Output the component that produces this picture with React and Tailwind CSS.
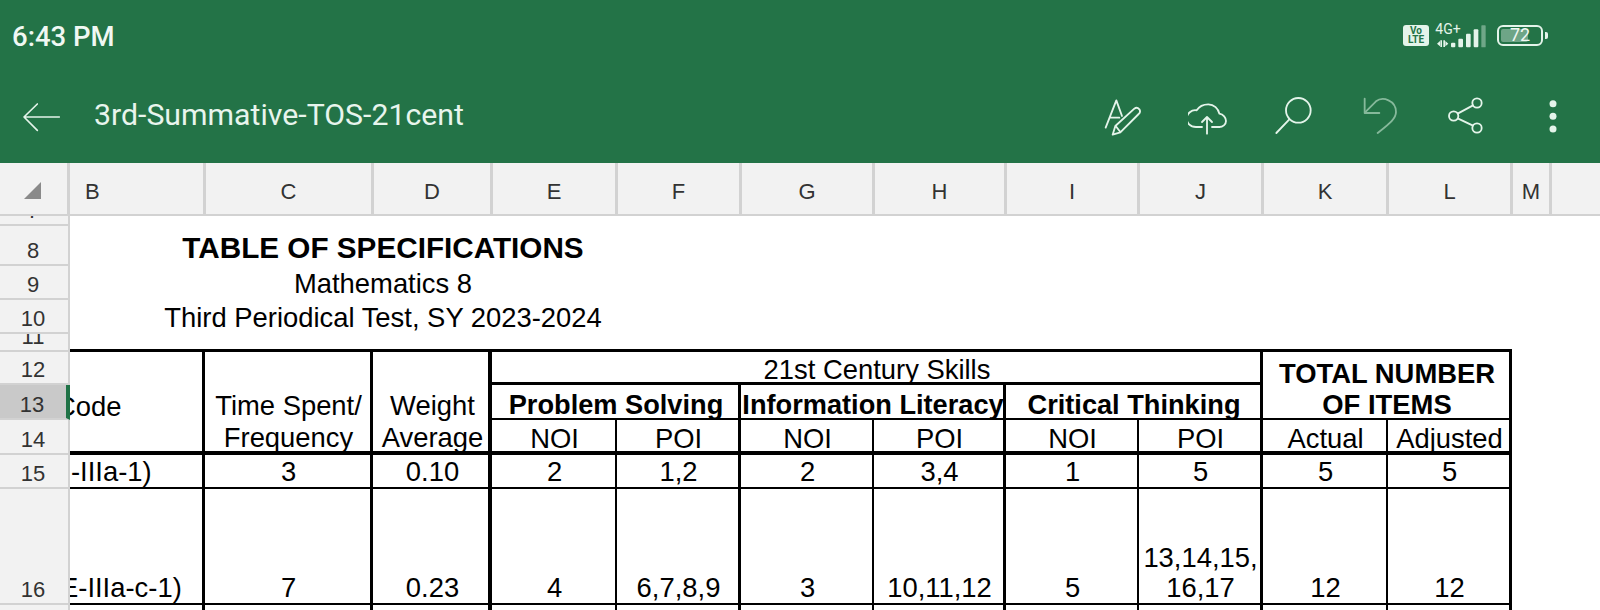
const ICON = "#e4f4ea";

function Icon({ cx, className = "", children }) {
  return (
    <div className={"flex w-[86px] items-center justify-center " + className}>
      <svg width="40" height="40" viewBox={`${cx - 60} 35 120 120`} fill="none" stroke={ICON} strokeWidth="5.5" strokeLinecap="round" strokeLinejoin="round">
        {children}
      </svg>
    </div>
  );
}

function StatusBar() {
  return (
    <div className="flex h-[70px] items-center justify-between pl-3 pr-[57px] text-[#f0f8f3]">
      <span className="mt-[4px] text-[27.5px] font-medium">6:43 PM</span>
      <div className="flex items-center">
        <div className="flex h-[21px] w-[26px] flex-col items-center justify-center rounded-[3px] bg-[#e4f4ea] text-[10px] font-bold leading-[9px] text-[#237347]">
          <span>Vo</span>
          <span>LTE</span>
        </div>
        <svg className="ml-[6px]" width="52" height="26" viewBox="165 30 156 78" fill="#e4f4ea">
          <text x="166" y="65" fontSize="42" fontFamily="Roboto, sans-serif">4G+</text>
          <path d="M171 95L180 87V103ZM181 85H186V105H181ZM205 95L196 87V103ZM190 85H195V105H190Z" />
          <rect x="213" y="92" width="13" height="14" rx="3" />
          <rect x="235" y="80" width="14" height="26" rx="3" />
          <rect x="258" y="65" width="14" height="41" rx="3" />
          <rect x="281" y="52" width="14" height="54" rx="3" />
          <rect x="304" y="40" width="13" height="66" rx="2" opacity="0.4" />
        </svg>
        <div className="relative ml-[10px] flex h-[21px] w-[46px] items-center justify-center rounded-[6px] border-2 border-[#e4f4ea] text-[18px] leading-none">
          <div className="absolute bottom-[2px] left-[2px] top-[2px] w-[27px] rounded-[2px] bg-[#6ea587]" />
          <span className="relative">72</span>
          <div className="absolute -right-[7px] top-[5px] h-[7px] w-[3px] rounded-r-[2px] bg-[#e4f4ea]" />
        </div>
      </div>
    </div>
  );
}

function Toolbar() {
  return (
    <div className="flex h-[93px] items-center pl-[22px] pr-[5px]">
      <svg width="40" height="40" viewBox="66 27 120 120" fill="none" stroke={ICON} strokeWidth="5" strokeLinecap="round" strokeLinejoin="round">
        <path d="M178 87H72M112 48L72 87L112 127" />
      </svg>
      <span className="ml-[32px] flex-1 pb-[3px] text-[30.25px] text-[#e8f5ed]">3rd-Summative-TOS-21cent</span>
      <div className="flex">
        <Icon cx={125}>
          <path d="M76 127L108 45L125 92M88 97H117" />
          <path d="M97 148L105 122L162 70Q170 64 177 72Q182 80 175 86L120 141ZM106 122L120 140" />
        </Icon>
        <Icon cx={384}>
          <path d="M366 125H348C330 125 320 112 320 100C320 85 335 72 350 75C358 62 372 57 385 57C402 57 415 70 418 85C430 87 438 97 438 107C438 118 428 125 418 125H396" />
          <path d="M381 145V95M366 110L381 95L396 110" />
        </Icon>
        <Icon cx={640}>
          <circle cx="653" cy="75" r="37" />
          <path d="M626 102L587 143" />
        </Icon>
        <Icon cx={897}>
          <g stroke="#86b99b">
            <path d="M851 40V83H895" />
            <path d="M852 81L885 48C905 32 945 45 945 80C945 100 925 115 890 143" />
          </g>
        </Icon>
        <Icon cx={1157}>
          <circle cx="1190" cy="53" r="14" />
          <circle cx="1120" cy="92" r="14" />
          <circle cx="1190" cy="128" r="14" />
          <path d="M1132 85L1178 60M1132 99L1178 121" />
        </Icon>
        <Icon cx={1418} className="translate-x-[1px]">
          <g fill={ICON} stroke="none">
            <circle cx="1418" cy="55" r="10.5" />
            <circle cx="1418" cy="93" r="10.5" />
            <circle cx="1418" cy="131" r="10.5" />
          </g>
        </Icon>
      </div>
    </div>
  );
}

function Col({ children, className = "translate-x-[1px]" }) {
  return (
    <div className={"flex items-center justify-center border-r-[3px] border-b-[2px] border-[#d2d2d2] bg-[#f2f2f2] pt-[5px] text-[22px] text-[#333333] " + className}>
      {children}
    </div>
  );
}

function Row({ n, className = "" }) {
  return (
    <div className={"col-start-1 flex items-end justify-center overflow-hidden border-r-[2px] border-b-[2px] border-[#d2d2d2] pb-[1px] pr-[2px] text-[22px] leading-[24px] text-[#333333] " + className}>
      {n}
    </div>
  );
}

function Cell({ children, className = "" }) {
  return (
    <div className={"flex flex-col items-center justify-end overflow-hidden whitespace-nowrap border-black pl-[2px] text-center " + className}>
      {children}
    </div>
  );
}

function Sheet() {
  return (
    <div
      className="grid h-[447px] grid-cols-[70px_135px_168px_119px_125px_124px_133px_132px_133px_124px_125px_124px_39px_1fr] grid-rows-[53px_10px_40px_34px_34px_18px_33px_35px_35px_34px_116px_5px] overflow-hidden bg-white text-[27.4px] leading-[31px] text-black"
      style={{ fontFamily: '"Liberation Sans", Arial, sans-serif' }}
    >
      <div className="flex items-end justify-center border-r-[3px] border-b-[2px] border-[#d2d2d2] bg-[#f2f2f2] pb-[15px] pr-[3px]">
        <div className="h-0 w-0 border-b-[17px] border-l-[17px] border-b-[#8a8a8a] border-l-transparent" />
      </div>
      <Col className="-mr-[1px] !justify-start pl-[15px]">B</Col>
      <Col>C</Col>
      <Col>D</Col>
      <Col>E</Col>
      <Col>F</Col>
      <Col>G</Col>
      <Col>H</Col>
      <Col>I</Col>
      <Col>J</Col>
      <Col>K</Col>
      <Col>L</Col>
      <Col>M</Col>
      <div className="border-b-[2px] border-[#d2d2d2] bg-[#f2f2f2]" />

      <Row n="7" className="bg-[#f2f2f2]" />
      <div className="col-span-13" />
      <Row n="8" className="bg-[#f2f2f2]" />
      <div className="col-span-13 flex items-end">
        <div className="w-[626px] pb-[1px] text-center text-[29.7px] font-bold leading-[34px]">TABLE OF SPECIFICATIONS</div>
      </div>
      <Row n="9" className="bg-[#f2f2f2]" />
      <div className="col-span-13 flex items-end">
        <div className="w-[626px] pb-[1px] text-center">Mathematics 8</div>
      </div>
      <Row n="10" className="bg-[#f2f2f2]" />
      <div className="col-span-13 flex items-end">
        <div className="w-[626px] pb-[1px] text-center">Third Periodical Test, SY 2023-2024</div>
      </div>
      <Row n="11" className="bg-[#f2f2f2]" />
      <div className="col-span-11 border-b-[3px] border-black" />
      <div className="col-span-2" />

      <Row n="12" className="bg-[#f2f2f2]" />
      <Cell className="row-span-3 border-r-[3px] border-b-[4px] !items-start pb-[29px]">
        <span className="-ml-[16px]">Code</span>
      </Cell>
      <Cell className="row-span-3 border-r-[3px] border-b-[4px] leading-[32px]">
        <div className="-mb-[3px] flex flex-col">
          <span>Time Spent/</span>
          <span>Frequency</span>
        </div>
      </Cell>
      <Cell className="row-span-3 border-r-[4px] border-b-[4px] !pl-[4px] leading-[32px]">
        <div className="-mb-[3px] flex flex-col">
          <span>Weight</span>
          <span>Average</span>
        </div>
      </Cell>
      <Cell className="col-span-6 border-r-[3px] border-b-[3px] leading-[25px]">21st Century Skills</Cell>
      <Cell className="col-span-2 row-span-2 border-r-[3px] border-b-[2px] font-bold leading-[31px]">
        <div className="-mb-[2px] flex flex-col">
          <span>TOTAL NUMBER</span>
          <span>OF ITEMS</span>
        </div>
      </Cell>

      <Row n="13" className="border-r-[4px] border-r-[#1f7246] bg-[#c9c9c9]" />
      <Cell className="col-span-2 border-r-[3px] border-b-[2px] text-[27.2px] font-bold leading-[27px]">Problem Solving</Cell>
      <Cell className="col-span-2 border-r-[3px] border-b-[2px] text-[27.2px] font-bold leading-[27px]">Information Literacy</Cell>
      <Cell className="col-span-2 border-r-[3px] border-b-[2px] text-[27.2px] font-bold leading-[27px]">Critical Thinking</Cell>

      <Row n="14" className="bg-[#f2f2f2]" />
      <Cell className="border-r-[2px] border-b-[4px] leading-[25px]">NOI</Cell>
      <Cell className="border-r-[3px] border-b-[4px] leading-[25px]">POI</Cell>
      <Cell className="border-r-[2px] border-b-[4px] leading-[25px]">NOI</Cell>
      <Cell className="border-r-[3px] border-b-[4px] leading-[25px]">POI</Cell>
      <Cell className="border-r-[2px] border-b-[4px] leading-[25px]">NOI</Cell>
      <Cell className="border-r-[3px] border-b-[4px] leading-[25px]">POI</Cell>
      <Cell className="border-r-[2px] border-b-[4px] leading-[25px]">Actual</Cell>
      <Cell className="border-r-[3px] border-b-[4px] leading-[25px]">Adjusted</Cell>

      <Row n="15" className="bg-[#f2f2f2]" />
      <Cell className="border-r-[3px] border-b-[2px] !items-start leading-[30px]">
        <span className="-ml-[1px]">-IIIa-1)</span>
      </Cell>
      <Cell className="border-r-[3px] border-b-[2px] leading-[30px]">3</Cell>
      <Cell className="border-r-[4px] border-b-[2px] !pl-[4px] leading-[30px]">0.10</Cell>
      <Cell className="border-r-[2px] border-b-[2px] leading-[30px]">2</Cell>
      <Cell className="border-r-[3px] border-b-[2px] leading-[30px]">1,2</Cell>
      <Cell className="border-r-[2px] border-b-[2px] leading-[30px]">2</Cell>
      <Cell className="border-r-[3px] border-b-[2px] leading-[30px]">3,4</Cell>
      <Cell className="border-r-[2px] border-b-[2px] leading-[30px]">1</Cell>
      <Cell className="border-r-[3px] border-b-[2px] leading-[30px]">5</Cell>
      <Cell className="border-r-[2px] border-b-[2px] leading-[30px]">5</Cell>
      <Cell className="border-r-[3px] border-b-[2px] leading-[30px]">5</Cell>

      <Row n="16" className="bg-[#f2f2f2]" />
      <Cell className="border-r-[3px] border-b-[2px] !items-start leading-[30px]">
        <span className="-ml-[12px]">E-IIIa-c-1)</span>
      </Cell>
      <Cell className="border-r-[3px] border-b-[2px] leading-[30px]">7</Cell>
      <Cell className="border-r-[4px] border-b-[2px] !pl-[4px] leading-[30px]">0.23</Cell>
      <Cell className="border-r-[2px] border-b-[2px] leading-[30px]">4</Cell>
      <Cell className="border-r-[3px] border-b-[2px] leading-[30px]">6,7,8,9</Cell>
      <Cell className="border-r-[2px] border-b-[2px] leading-[30px]">3</Cell>
      <Cell className="border-r-[3px] border-b-[2px] leading-[30px]">10,11,12</Cell>
      <Cell className="border-r-[2px] border-b-[2px] leading-[30px]">5</Cell>
      <Cell className="border-r-[3px] border-b-[2px] leading-[30px]">
        <span>13,14,15,</span>
        <span>16,17</span>
      </Cell>
      <Cell className="border-r-[2px] border-b-[2px] leading-[30px]">12</Cell>
      <Cell className="border-r-[3px] border-b-[2px] leading-[30px]">12</Cell>

      <div className="col-start-1 border-r-[2px] border-[#d2d2d2] bg-[#f2f2f2]" />
      <Cell className="border-r-[3px]" />
      <Cell className="border-r-[3px]" />
      <Cell className="border-r-[4px]" />
      <Cell className="border-r-[2px]" />
      <Cell className="border-r-[3px]" />
      <Cell className="border-r-[2px]" />
      <Cell className="border-r-[3px]" />
      <Cell className="border-r-[2px]" />
      <Cell className="border-r-[3px]" />
      <Cell className="border-r-[2px]" />
      <Cell className="border-r-[3px]" />
    </div>
  );
}

export default function App() {
  return (
    <div className="h-[610px] w-[1600px] overflow-hidden bg-white" style={{ fontFamily: "Roboto, sans-serif" }}>
      <div className="h-[163px] bg-[#237347]">
        <StatusBar />
        <Toolbar />
      </div>
      <Sheet />
    </div>
  );
}
